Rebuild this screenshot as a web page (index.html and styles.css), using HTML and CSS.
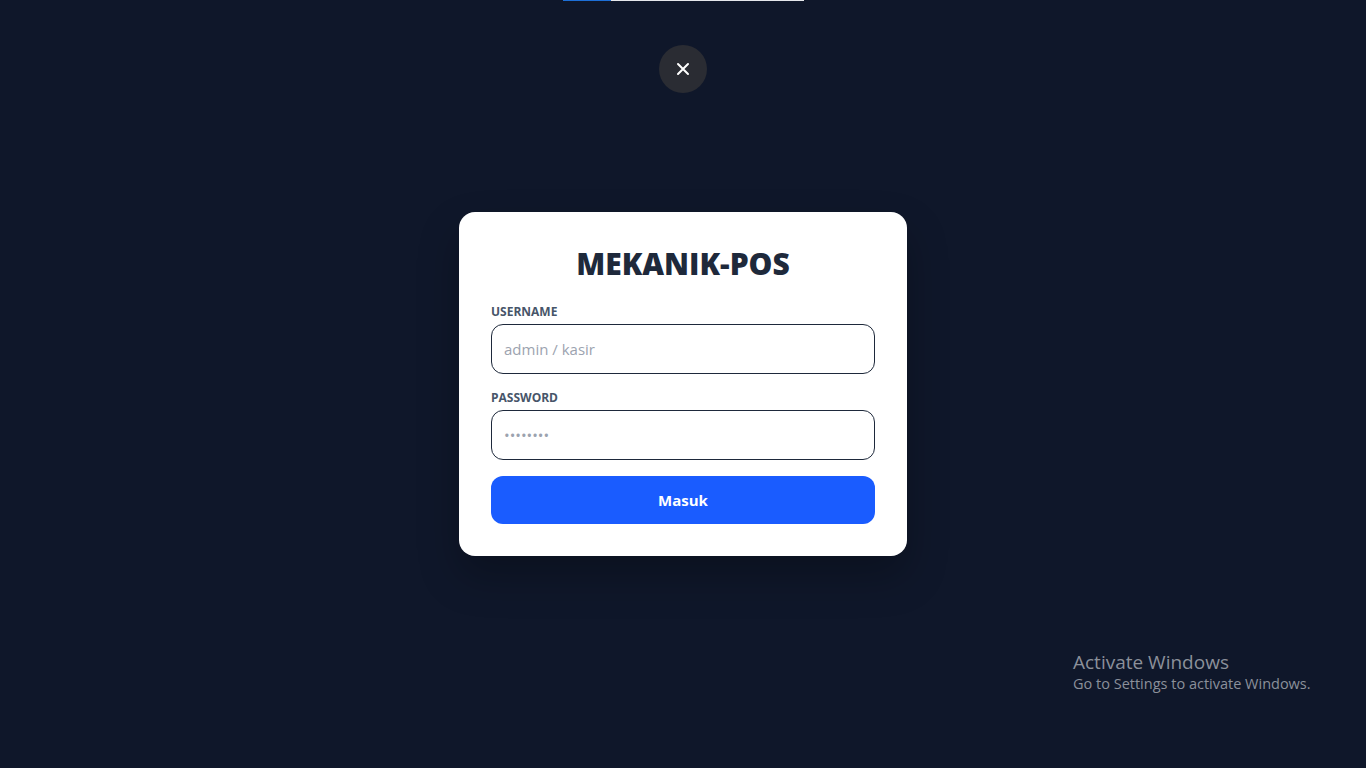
FILE: index.html
```html
<!DOCTYPE html>
<html lang="id">
<head>
    <meta charset="utf-8">
    <title>Mekanik-POS - Login</title>
    <link rel="stylesheet" href="styles.css">
</head>
<body>
    <div class="loader-bar"><span class="loader-fill"></span></div>

    <button type="button" class="close-btn" aria-label="Tutup">
        <svg width="16" height="16" viewBox="0 0 16 16">
            <path d="M3 3 L13 13 M13 3 L3 13" stroke="#fff" stroke-width="2" stroke-linecap="round"/>
        </svg>
    </button>

    <div class="login-card">
        <h1>MEKANIK-POS</h1>
        <form id="loginForm">
            <div class="form-group">
                <label for="username">USERNAME</label>
                <input type="text" id="username" placeholder="admin / kasir">
            </div>
            <div class="form-group">
                <label for="password">PASSWORD</label>
                <input type="password" id="password" placeholder="••••••••">
            </div>
            <button type="submit" class="button">Masuk</button>
        </form>
    </div>

    <div class="activate">
        <div class="activate-title">Activate Windows</div>
        <div class="activate-sub">Go to Settings to activate Windows.</div>
    </div>
</body>
</html>
```

FILE: styles.css
```css
body {
    margin: 0;
    padding: 0;
    height: 100vh;
    background-color: #0f172a;
    font-family: "Open Sans", "Noto Sans", Arial, sans-serif;
    display: flex;
    align-items: center;
    justify-content: center;
    overflow: hidden;
}

.loader-bar {
    position: absolute;
    top: 0;
    left: 563px;
    width: 241px;
    height: 1px;
    background-color: #e5e7eb;
}

.loader-fill {
    display: block;
    width: 48px;
    height: 100%;
    background-color: #1d6fd6;
}

.close-btn {
    position: absolute;
    top: 45px;
    left: 659px;
    width: 48px;
    height: 48px;
    border: none;
    border-radius: 50%;
    background-color: #2a2c33;
    display: flex;
    align-items: center;
    justify-content: center;
    padding: 0;
    cursor: pointer;
}

.login-card {
    width: 384px;
    padding: 32px;
    background-color: #fff;
    border-radius: 16px;
    box-shadow: 0 20px 40px rgba(0, 0, 0, 0.25);
}

h1 {
    margin: 0 0 22px;
    padding-top: 2px;
    font-size: 30px;
    line-height: 36px;
    font-weight: 800;
    text-align: center;
    color: #1e293b;
}

.form-group {
    margin-bottom: 16px;
}

.form-group label {
    display: block;
    margin-bottom: 4px;
    font-size: 12px;
    line-height: 16px;
    font-weight: 700;
    color: #475569;
}

input {
    box-sizing: border-box;
    width: 100%;
    height: 50px;
    padding: 0 12px;
    font-family: inherit;
    font-size: 15px;
    color: #1e293b;
    border: 1px solid #1e293b;
    border-radius: 12px;
    outline: none;
}

input::placeholder {
    color: #9ca3af;
}

.button {
    width: 100%;
    height: 48px;
    background-color: #1a5cff;
    color: #fff;
    border: none;
    border-radius: 12px;
    font-family: inherit;
    font-size: 15px;
    font-weight: 700;
    cursor: pointer;
}

.activate {
    position: absolute;
    left: 1073px;
    top: 650px;
    color: #8b909a;
}

.activate-title {
    font-size: 19px;
    line-height: 24px;
}

.activate-sub {
    font-size: 14.5px;
    line-height: 20px;
}
```
